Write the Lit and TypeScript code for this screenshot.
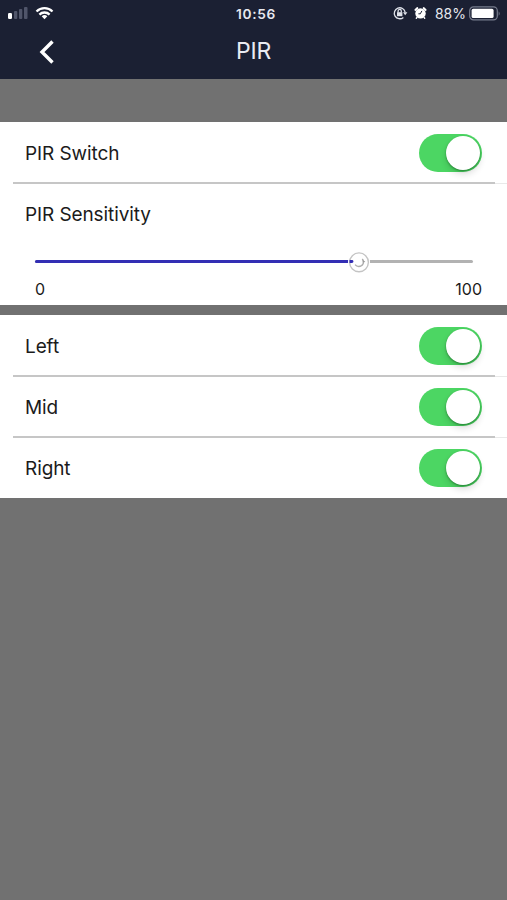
import { LitElement, html, css } from "lit";
import { customElement, property } from "lit/decorators.js";

@customElement("status-bar")
class StatusBar extends LitElement {
  static styles = css`
    :host { display: grid; grid-template-columns: 1fr auto 1fr; align-items: center; height: 27px; padding: 0 6px 0 7px; color: #e6e8ef; }
    .left { display: flex; align-items: center; gap: 7px; margin-top: -1px; }
    .time { font-size: 13.7px; font-weight: 600; letter-spacing: 0.7px; padding-left: 4px; }
    .right { display: flex; align-items: center; justify-content: flex-end; }
    .lock, .alarm { margin-top: -1px; }
    .alarm { margin-left: 6px; }
    .pct { font-size: 14px; margin: 0 3px 0 8px; letter-spacing: 0; }
    svg { display: block; }
  `;
  render() {
    return html`
      <div class="left">
        <svg width="21" height="14" viewBox="0 0 21 14">
          <rect x="1" y="7" width="4" height="6" rx="1.2" fill="#fff" />
          <rect x="7" y="5" width="3.3" height="8" rx="1" fill="#50556a" />
          <rect x="12" y="3" width="3.3" height="10" rx="1" fill="#50556a" />
          <rect x="17" y="1" width="3.5" height="12" rx="1" fill="#50556a" />
        </svg>
        <svg width="19" height="14" viewBox="0 0 19 14" fill="none" stroke="#fff" stroke-width="2.3">
          <path d="M1.5 5.5a11.4 11.4 0 0 1 16 0" />
          <path d="M4.4 8.6a7.2 7.2 0 0 1 10.2 0" />
          <path d="M9.5 13.2l-2.8-2.9a4 4 0 0 1 5.6 0z" fill="#fff" stroke="none" />
        </svg>
      </div>
      <div class="time">10:56</div>
      <div class="right">
        <svg class="lock" width="15" height="14" viewBox="0 0 15 14" fill="none" stroke="#dfe2ea" stroke-width="1.3">
          <path d="M10.4 11.4A5.5 5.5 0 1 1 12.2 6.3" />
          <path d="M10 6.3h4.4l-2.2 3z" fill="#dfe2ea" stroke="none" />
          <rect x="4" y="6.2" width="5.4" height="4" fill="#dfe2ea" stroke="none" />
          <path d="M5.1 6.5V5a1.6 1.6 0 0 1 3.2 0v1.5" />
        </svg>
        <svg class="alarm" width="13" height="14" viewBox="0 0 13 14">
          <circle cx="6.5" cy="7.4" r="5.2" fill="#fff" />
          <path d="M1.3 4l2.1-2M11.7 4L9.6 2" stroke="#fff" stroke-width="1.8" stroke-linecap="round" />
          <path d="M3 11.4l-.7.8M10 11.4l.7.8" stroke="#fff" stroke-width="1.4" stroke-linecap="round" />
          <path d="M7.9 4.9L6.3 7.8H4.4" fill="none" stroke="#1c2135" stroke-width="1" />
        </svg>
        <span class="pct">88%</span>
        <svg width="32" height="15" viewBox="0 0 32 15">
          <rect x="0.7" y="0.9" width="27.6" height="13" rx="3.8" fill="none" stroke="#777c8d" stroke-width="1.2" />
          <rect x="2.6" y="2.8" width="22" height="9.2" rx="1.6" fill="#fff" />
          <path d="M29.7 5.2q1.9 2.3 0 4.6z" fill="#777c8d" />
        </svg>
      </div>
    `;
  }
}

@customElement("toggle-switch")
class ToggleSwitch extends LitElement {
  static styles = css`
    :host { display: flex; justify-content: flex-end; align-items: center; box-sizing: border-box; width: 63px; height: 38px; padding: 0 2px; border-radius: 19px; background: #4cd663; }
    .knob { width: 34px; height: 34px; border-radius: 50%; background: #fff; box-shadow: 0 1px 2px rgba(0, 60, 10, 0.45), 0 4px 7px rgba(0, 0, 0, 0.14); }
  `;
  render() {
    return html`<div class="knob"></div>`;
  }
}

@customElement("range-slider")
class RangeSlider extends LitElement {
  @property({ type: Number }) value = 74;
  static styles = css`
    :host { display: block; position: relative; width: 438px; height: 3px; border-radius: 2px; background: #b2b2b2; }
    .fill { height: 3px; border-radius: 2px; background: #332eb4; }
    .thumb { position: absolute; top: -9px; margin-left: -11px; }
    svg { display: block; }
  `;
  render() {
    return html`
      <div class="fill" style="width:${this.value}%"></div>
      <div class="thumb" style="left:${this.value}%">
        <svg width="22" height="22" viewBox="0 0 22 22">
          <circle cx="11" cy="11" r="11" fill="#fff" />
          <circle cx="11" cy="11.3" r="9.4" fill="#fff" stroke="#c4c4c4" stroke-width="1.4" />
          <path d="M1.5 9.1H4a1.4 1.4 0 0 1 0 2.8H1.5z" fill="#332eb4" />
          <path d="M14.2 7.9c3 2.8.6 7.6-3.4 7.6-1.7 0-2.9-.7-3.7-1.8" fill="none" stroke="#adadad" stroke-width="1.4" />
          <path d="M14.4 9.2l3 1.2-2.5 1.2z" fill="#999" />
        </svg>
      </div>
    `;
  }
}

@customElement("app-root")
class AppRoot extends LitElement {
  static styles = css`
    :host { display: flex; flex-direction: column; height: 900px; background: #717171; font-family: Inter, "Liberation Sans", sans-serif; color: #1b1b1b; overflow: hidden; }
    header { height: 79px; background: #1b2033; }
    .nav { display: grid; grid-template-columns: 1fr auto 1fr; align-items: center; height: 49px; color: #e9ebf2; }
    .back { display: block; margin: 1px 0 0 38px; }
    .title { font-size: 23px; line-height: 28px; letter-spacing: -0.3px; padding-bottom: 2px; }
    .card { background: #fff; }
    .first { margin-top: 43px; height: 183px; }
    .second { margin-top: 10px; height: 183px; }
    .row { display: flex; align-items: center; justify-content: space-between; box-sizing: border-box; height: 61px; padding: 1px 25px 0 25px; }
    .label { font-size: 19px; line-height: 24px; letter-spacing: -0.1px; padding-top: 1px; }
    .line { display: flex; align-items: flex-end; height: 2px; margin: -1px 0 -1px 13px; }
    .line::before { content: ""; flex: 1; height: 2px; background: #c6c6c6; }
    .line::after { content: ""; width: 12px; height: 1px; background: #e9e9e9; }
    .sensitivity { padding: 19px 25px 0; }
    .slider { margin: 33px 0 0 10px; }
    .scale { display: flex; justify-content: space-between; margin: 16px 0 0 10px; font-size: 16px; line-height: 20px; }
  `;
  row(label: string) {
    return html`<div class="row"><span class="label">${label}</span><toggle-switch></toggle-switch></div>`;
  }
  render() {
    return html`
      <header>
        <status-bar></status-bar>
        <div class="nav">
          <svg class="back" width="18" height="26" viewBox="0 0 18 26" fill="none" stroke="#fff" stroke-width="3.4">
            <path d="M14.5 2.5L4 13l10.5 10.5" />
          </svg>
          <span class="title">PIR</span>
        </div>
      </header>
      <section class="card first">
        ${this.row("PIR Switch")}
        <div class="line"></div>
        <div class="sensitivity">
          <div class="label">PIR Sensitivity</div>
          <range-slider class="slider" .value=${74}></range-slider>
          <div class="scale"><span>0</span><span>100</span></div>
        </div>
      </section>
      <section class="card second">
        ${this.row("Left")}
        <div class="line"></div>
        ${this.row("Mid")}
        <div class="line"></div>
        ${this.row("Right")}
      </section>
    `;
  }
}
